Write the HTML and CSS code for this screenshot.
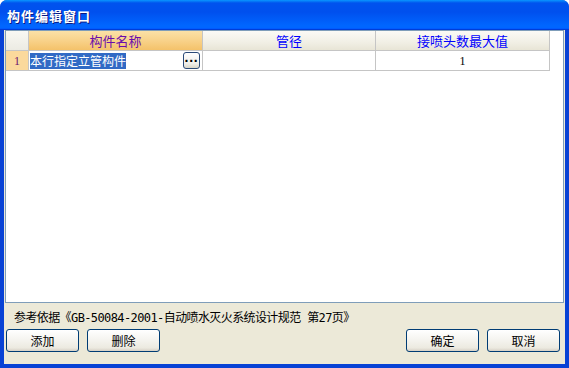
FILE: index.html
```html
<!DOCTYPE html>
<html>
<head>
<meta charset="utf-8">
<link rel="stylesheet" href="styles.css">
</head>
<body>
<div class="window">
  <div class="titlebar"><span class="title">构件编辑窗口</span></div>
  <div class="client">
    <div class="grid">
      <div class="row header">
        <div class="cell num hnum"></div>
        <div class="cell hsel">构件名称</div>
        <div class="cell hblue">管径</div>
        <div class="cell hblue">接喷头数最大值</div>
      </div>
      <div class="row">
        <div class="cell num rnum">1</div>
        <div class="cell edit"><span class="seltext">本行指定立管构件</span><span class="dots">···</span></div>
        <div class="cell"></div>
        <div class="cell val">1</div>
      </div>
    </div>
    <div class="ref">参考依据《GB-50084-2001-自动喷水灭火系统设计规范 第27页》</div>
    <div class="buttons">
      <div class="group">
        <button class="btn">添加</button>
        <button class="btn">删除</button>
      </div>
      <div class="group">
        <button class="btn">确定</button>
        <button class="btn">取消</button>
      </div>
    </div>
  </div>
</div>
</body>
</html>
```

FILE: styles.css
```css
html, body {
  margin: 0;
  padding: 0;
  width: 569px;
  height: 368px;
  overflow: hidden;
  background: #ffffff;
}
.window {
  width: 569px;
  height: 368px;
  display: flex;
  flex-direction: column;
  border-radius: 7px 7px 0 0;
  overflow: hidden;
  background: #0842d5;
  font-family: "Noto Sans CJK SC", "Liberation Sans", sans-serif;
  font-size: 12px;
}
.titlebar {
  height: 30px;
  flex: none;
  display: flex;
  align-items: center;
  padding-left: 7px;
  background: linear-gradient(180deg, #0997ff 0%, #0053ee 10%, #0050ee 40%, #0066ff 85%, #0066ff 92%, #005bff 95%, #003dd7 97%, #003dd7 100%);
}
.title {
  color: #ffffff;
  font-weight: bold;
  font-size: 13px;
  letter-spacing: 1px;
  text-shadow: 1px 1px 0 #0a1883;
}
.client {
  flex: 1;
  margin: 0 4px 4px 4px;
  background: #ece9d8;
  display: flex;
  flex-direction: column;
}
.grid {
  height: 271px;
  margin: 0 1px 0 1px;
  border: 1px solid #7f9db9;
  background: #ffffff;
}
.row {
  display: grid;
  grid-template-columns: 23px 174px 173px 174px;
  height: 20px;
}
.cell {
  border-right: 1px solid #c5c5c5;
  border-bottom: 1px solid #c5c5c5;
  display: flex;
  align-items: center;
  justify-content: center;
  line-height: 1;
  position: relative;
}
.header .cell {
  background: linear-gradient(180deg, #fbfaf6 0%, #f1efe5 60%, #e8e5d6 100%);
  font-size: 13px;
}
.header .hsel {
  background: linear-gradient(180deg, #fbe1a7 0%, #f8d28a 50%, #f4c26a 100%);
  color: #6a0dad;
}
.hblue {
  color: #0000ff;
}
.header .hnum {
  background: linear-gradient(180deg, #f9f8f3 0%, #ecebe3 100%);
}
.rnum {
  background: #fbd99c;
  color: #6a1570;
  font-family: "Liberation Serif", serif;
}
.edit {
  justify-content: flex-start;
  padding-left: 1px;
}
.seltext {
  background: #316ac5;
  color: #ffffff;
  padding: 2px 0 2px 0;
  line-height: 12px;
}
.dots {
  position: absolute;
  right: 2px;
  top: 1px;
  width: 15px;
  height: 15px;
  border: 1px solid #2b4a78;
  border-radius: 3px;
  background: linear-gradient(180deg, #ffffff 0%, #f0efea 70%, #d9d6c8 100%);
  color: #000;
  font-weight: bold;
  font-size: 14px;
  display: flex;
  align-items: center;
  justify-content: center;
  line-height: 1;
  font-family: "Liberation Sans", sans-serif;
}
.val {
  font-family: "Liberation Serif", serif;
  color: #000000;
}
.ref {
  height: 26px;
  display: flex;
  align-items: center;
  padding-left: 10px;
  color: #000;
  font-size: 12px;
  font-family: "DejaVu Sans Mono", "Noto Sans CJK SC", monospace;
  letter-spacing: -0.6px;
}
.buttons {
  display: flex;
  justify-content: space-between;
  padding: 0 5px 0 2px;
}
.group {
  display: flex;
  gap: 8px;
}
.btn {
  width: 73px;
  height: 23px;
  margin: 0;
  padding: 0;
  border: 1px solid #003c74;
  border-radius: 3px;
  background: linear-gradient(180deg, #ffffff 0%, #f4f3ee 50%, #eceae0 85%, #d6d0c5 100%);
  font-family: "Noto Sans CJK SC", sans-serif;
  font-size: 12px;
  color: #000;
}
```
